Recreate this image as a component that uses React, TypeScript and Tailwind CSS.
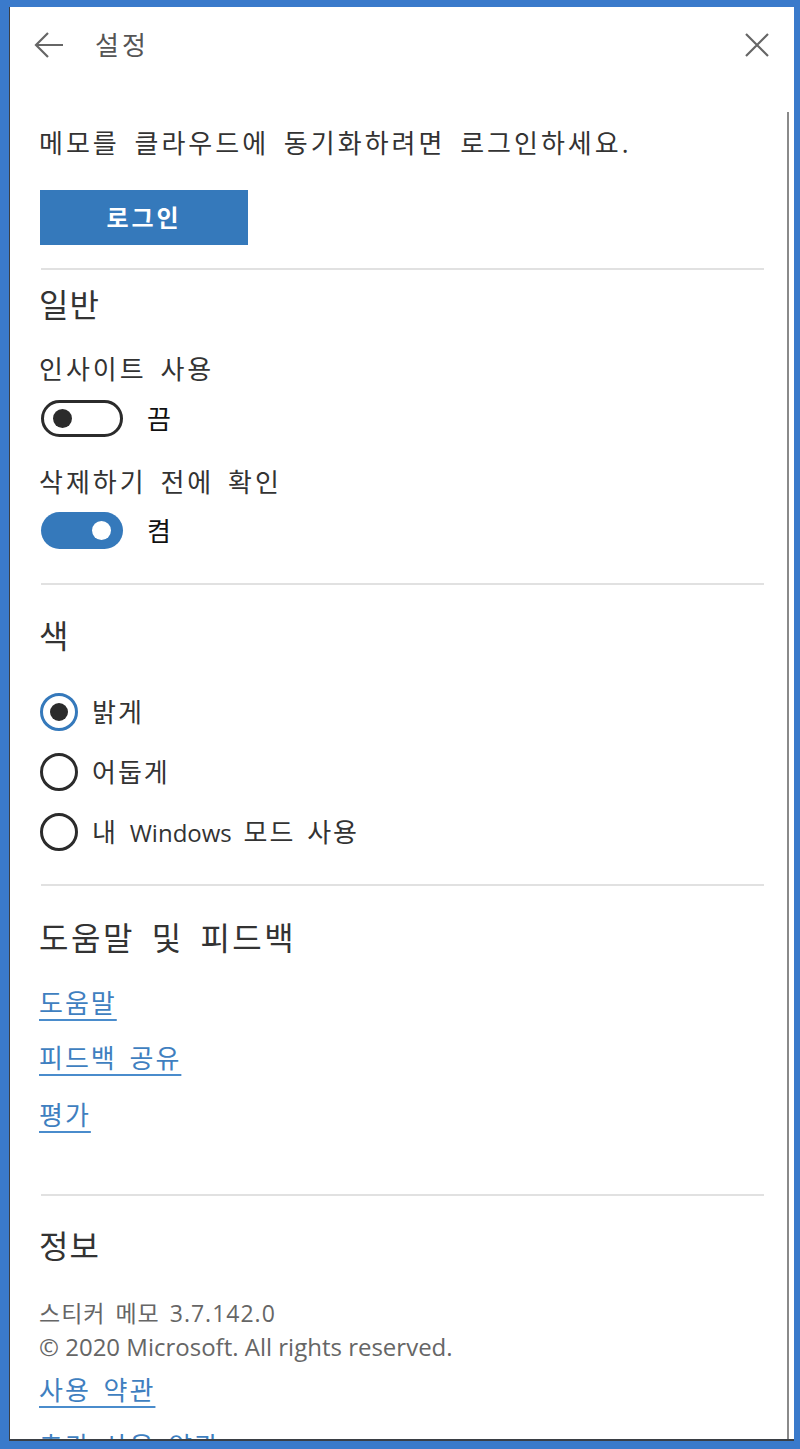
import React from "react"

const font = {
  fontFamily: '"Open Sans", "Noto Sans CJK KR", sans-serif',
}

function Divider({ className = "" }: { className?: string }) {
  return <div className={`h-[2px] bg-[#e1e1e1] ${className}`} />
}

function Toggle({ on }: { on: boolean }) {
  return on ? (
    <div className="flex h-[37px] w-[82px] items-center justify-end rounded-full bg-[#3579bb] pr-[12px]">
      <div className="size-[19px] rounded-full bg-white" />
    </div>
  ) : (
    <div className="flex h-[37px] w-[82px] items-center rounded-full border-[3px] border-[#2b2b2b] pl-[9px]">
      <div className="size-[19px] rounded-full bg-[#2b2b2b]" />
    </div>
  )
}

function Radio({ checked, children, className = "" }: { checked: boolean; children: React.ReactNode; className?: string }) {
  return (
    <div className={`flex h-[38px] items-center gap-[14px] ${className}`}>
      <div
        className={`flex size-[38px] shrink-0 items-center justify-center rounded-full border-[3px] ${
          checked ? "border-[#3579bb]" : "border-[#2b2b2b]"
        }`}
      >
        {checked && <div className="size-[18px] rounded-full bg-[#2b2b2b]" />}
      </div>
      <span className="text-[26px] leading-[36px] tracking-[2px] text-[#333] [word-spacing:3px]">{children}</span>
    </div>
  )
}

function Link({ children, className = "" }: { children: React.ReactNode; className?: string }) {
  return (
    <a
      className={`block w-fit text-[26px] leading-[36px] tracking-[2px] text-[#3f7fc0] underline decoration-[#4a8ccc] decoration-2 underline-offset-[6px] [word-spacing:4px] ${className}`}
    >
      {children}
    </a>
  )
}

export default function App() {
  return (
    <div className="h-[1449px] w-[800px] overflow-hidden bg-[#3a7acb] pt-[7px] pl-[9px]" style={font}>
      <div className="relative h-[1434px] w-[785px] overflow-hidden border-b-2 border-l border-b-[#3a3f45] border-l-[#3a3f45] bg-white">
        {/* Header */}
        <div className="flex h-[76px] items-center pr-[24px] pl-[23px]">
          <svg width="32" height="30" viewBox="0 0 32 30" fill="none" stroke="#666" strokeWidth="2.2">
            <path d="M30 15H3M15 3L3 15l12 12" />
          </svg>
          <span className="ml-[30px] text-[26px] leading-[36px] tracking-[3px] text-[#555]">설정</span>
          <svg className="ml-auto" width="26" height="26" viewBox="0 0 26 26" fill="none" stroke="#666" strokeWidth="2.2">
            <path d="M2 2l22 22M24 2L2 24" />
          </svg>
        </div>

        {/* Scrollbar */}
        <div className="absolute top-[105px] right-[5px] bottom-0 w-[2px] bg-[#8a8a8a]" />

        <div className="pr-[30px] pl-[29px]">
          <p className="mt-[42px] text-[26px] leading-[36px] tracking-[3px] text-[#333] [word-spacing:5px]">
            메모를 클라우드에 동기화하려면 로그인하세요.
          </p>
          <button className="mt-[29px] ml-[1px] flex h-[55px] w-[208px] items-center justify-center bg-[#3579bb] text-[24px] font-bold tracking-[3px] text-white">
            로그인
          </button>

          <Divider className="mt-[23px] ml-[2px]" />

          <h2 className="mt-[13px] text-[32px] leading-[44px] tracking-[1px] text-[#333]">일반</h2>
          <p className="mt-[24px] text-[26px] leading-[36px] tracking-[3px] text-[#333] [word-spacing:4px]">인사이트 사용</p>
          <div className="mt-[13px] ml-[2px] flex items-center gap-[24px]">
            <Toggle on={false} />
            <span className="text-[26px] leading-[36px] text-[#111]">끔</span>
          </div>
          <p className="mt-[27px] text-[26px] leading-[36px] tracking-[3px] text-[#333] [word-spacing:4px]">삭제하기 전에 확인</p>
          <div className="mt-[12px] ml-[2px] flex items-center gap-[24px]">
            <Toggle on />
            <span className="text-[26px] leading-[36px] text-[#111]">켬</span>
          </div>

          <Divider className="mt-[34px] ml-[2px]" />

          <h2 className="mt-[29px] text-[32px] leading-[44px] text-[#333]">색</h2>
          <Radio checked className="mt-[35px] ml-[1px]">밝게</Radio>
          <Radio checked={false} className="mt-[22px] ml-[1px]">어둡게</Radio>
          <Radio checked={false} className="mt-[22px] ml-[1px]">
            내 <span className="text-[24px] tracking-normal">Windows</span> 모드 사용
          </Radio>

          <Divider className="mt-[33px] ml-[2px]" />

          <h2 className="mt-[30px] text-[32px] leading-[44px] tracking-[2.5px] text-[#333] [word-spacing:6px]">도움말 및 피드백</h2>
          <Link className="mt-[25px]">도움말</Link>
          <Link className="mt-[19px]">피드백 공유</Link>
          <Link className="mt-[21px]">평가</Link>

          <Divider className="mt-[61px] ml-[2px]" />

          <h2 className="mt-[28px] text-[32px] leading-[44px] tracking-[1px] text-[#333]">정보</h2>
          <p className="mt-[30px] text-[23px] leading-[30px] tracking-[1px] text-[#666] [word-spacing:3px]">스티커 메모 3.7.142.0</p>
          <p className="mt-[4px] text-[24px] leading-[30px] text-[#666]">© 2020 Microsoft. All rights reserved.</p>
          <Link className="mt-[10px]">사용 약관</Link>
          <Link className="mt-[20px]">추가 사용 약관</Link>
        </div>
      </div>
    </div>
  )
}
